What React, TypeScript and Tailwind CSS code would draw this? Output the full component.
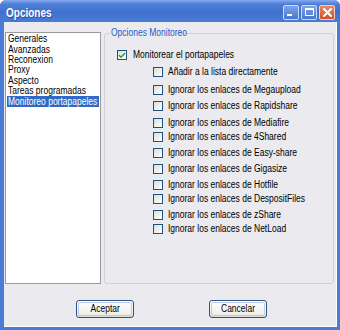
import { Check } from "lucide-react";

const font = "font-['Liberation_Sans',Arial,sans-serif]";

const listItems = [
  "Generales",
  "Avanzadas",
  "Reconexion",
  "Proxy",
  "Aspecto",
  "Tareas programadas",
  "Monitoreo portapapeles",
];

const subOptions: { label: string; mt: string }[] = [
  { label: "Añadir a la lista directamente", mt: "mt-[3px]" },
  { label: "Ignorar los enlaces de Megaupload", mt: "mt-[4px]" },
  { label: "Ignorar los enlaces de Rapidshare", mt: "mt-[2px]" },
  { label: "Ignorar los enlaces de Mediafire", mt: "mt-[3px]" },
  { label: "Ignorar los enlaces de 4Shared", mt: "mt-0" },
  { label: "Ignorar los enlaces de Easy-share", mt: "mt-[2px]" },
  { label: "Ignorar los enlaces de Gigasize", mt: "mt-[2px]" },
  { label: "Ignorar los enlaces de Hotfile", mt: "mt-[2px]" },
  { label: "Ignorar los enlaces de DespositFiles", mt: "mt-0" },
  { label: "Ignorar los enlaces de zShare", mt: "mt-[2px]" },
  { label: "Ignorar los enlaces de NetLoad", mt: "mt-0" },
];

// the reference font is a narrow Tahoma-like face, so squeeze Liberation Sans a bit
function Narrow({ children }: { children: React.ReactNode }) {
  return <span className="inline-block origin-left scale-x-[0.85] whitespace-nowrap leading-none">{children}</span>;
}

function CheckBox({ checked }: { checked?: boolean }) {
  return (
    <div className="w-[10px] h-[10px] border border-[#1c5180] bg-[linear-gradient(135deg,#dcdcd7,#ffffff)] flex items-center justify-center flex-shrink-0">
      {checked && <Check className="w-[9px] h-[9px] text-[#21a121]" strokeWidth={4} />}
    </div>
  );
}

function XpButton({ label }: { label: string }) {
  return (
    <button className="w-[58px] h-[18px] rounded-[3px] border border-[#36507a] bg-[linear-gradient(#ffffff,#f0f0ea_80%,#d8d6cf)] flex items-center justify-center p-[1px]">
      <span className={`w-full h-full rounded-[2px] border border-[#b9cdf0] flex items-center justify-center text-[10px] leading-none text-black ${font}`}>
        <span className="inline-block scale-x-[0.85] whitespace-nowrap">{label}</span>
      </span>
    </button>
  );
}

export default function App() {
  return (
    <div className="w-[340px] h-[330px] bg-[#4a7cd6] rounded-t-[6px] flex flex-col overflow-hidden">
      {/* Title bar */}
      <div className="h-[22px] flex items-center pl-[6px] pr-[5px] bg-[linear-gradient(#86aaee,#4f80d8_18%,#3f70cc_55%,#4a7cd6)] flex-shrink-0">
        <div className="flex-1">
          <span className={`inline-block origin-left scale-x-[0.8] text-white font-bold text-[12.5px] leading-none pt-[1px] ${font} [text-shadow:1px_1px_0_#2a4c99]`}>
            Opciones
          </span>
        </div>
        <div className="flex items-center gap-[2px] pt-[2px]">
          <div className="w-[16px] h-[15px] rounded-[2px] border border-[#c8d8f6] bg-[linear-gradient(#7ea4ea,#4676d2)] flex items-end pl-[3px] pb-[3px]">
            <div className="w-[5px] h-[2px] bg-white" />
          </div>
          <div className="w-[16px] h-[15px] rounded-[2px] border border-[#c8d8f6] bg-[linear-gradient(#7ea4ea,#4676d2)] flex items-center justify-center">
            <div className="w-[9px] h-[8px] border border-white border-t-2" />
          </div>
          <div className="w-[16px] h-[15px] rounded-[2px] border border-[#f1d0c4] bg-[linear-gradient(#e88a64,#d24e2a)] flex items-center justify-center">
            <svg width="9" height="9" viewBox="0 0 9 9">
              <path d="M1 1 L8 8 M8 1 L1 8" stroke="white" strokeWidth="2" strokeLinecap="square" />
            </svg>
          </div>
        </div>
      </div>

      {/* Client area */}
      <div className="flex-1 ml-[4px] mr-[3px] mb-[3px] bg-[#ebeaee] border-r border-b border-white flex flex-col">
        <div className="flex pt-[10px] pl-[1px] pr-[2px]">
          {/* List */}
          <div className={`w-[96px] h-[252px] bg-white border border-[#9a9a9a] pt-[1px] px-[1px] ${font}`}>
            {listItems.map((item, i) => {
              const selected = i === listItems.length - 1;
              return (
                <div
                  key={item}
                  className={
                    selected
                      ? "h-[10.4px] flex items-center text-[10px] pl-[1px] bg-[#316ac5] text-white"
                      : "h-[10.4px] flex items-center text-[10px] pl-[1px] text-black"
                  }
                >
                  <Narrow>{item}</Narrow>
                </div>
              );
            })}
          </div>

          {/* Group box */}
          <div className="relative flex-1 ml-[3px] mt-[1px] h-[251px] border border-[#d3d1d6] rounded-[3px]">
            <span className={`absolute -top-[6px] left-[5px] w-[66px] px-[1px] bg-[#ebeaee] text-[10px] leading-none text-[#1f5ac8] ${font}`}>
              <Narrow>Opciones Monitoreo</Narrow>
            </span>
            <div className={`flex flex-col pt-[14px] text-[10px] text-black ${font}`}>
              <div className="h-[14px] flex items-center pl-[12px] gap-[6px]">
                <CheckBox checked />
                <Narrow>Monitorear el portapapeles</Narrow>
              </div>
              {subOptions.map((o) => (
                <div key={o.label} className={`h-[14px] flex items-center pl-[48px] gap-[5px] ${o.mt}`}>
                  <CheckBox />
                  <Narrow>{o.label}</Narrow>
                </div>
              ))}
            </div>
          </div>
        </div>

        {/* Buttons */}
        <div className="flex pt-[16px] pl-[72px] gap-[75px]">
          <XpButton label="Aceptar" />
          <XpButton label="Cancelar" />
        </div>
      </div>
    </div>
  );
}
